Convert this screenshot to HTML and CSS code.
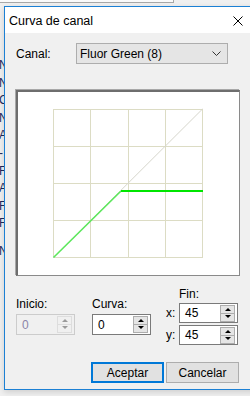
FILE: index.html
```html
<!DOCTYPE html>
<html lang="es">
<head>
    <meta charset="UTF-8">
    <title>Curva de canal</title>
    <link rel="stylesheet" href="styles.css">
</head>
<body>

<div class="desktop">
    <div class="back-top"></div>
    <ul class="back-list">
        <li>N</li>
        <li>N</li>
        <li>C</li>
        <li>N</li>
        <li>A</li>
        <li>-</li>
        <li>F</li>
        <li>A</li>
        <li>F</li>
        <li>F</li>
        <li class="gap">N</li>
    </ul>

    <div class="dialog">
        <div class="titlebar">
            <span class="title">Curva de canal</span>
            <svg class="close" width="10" height="10" viewBox="0 0 10 10">
                <path d="M0.5 0.5 L9.5 9.5 M9.5 0.5 L0.5 9.5" stroke="#000" stroke-width="1"/>
            </svg>
        </div>

        <div class="content">
            <div class="channel-row">
                <label class="channel-label">Canal:</label>
                <div class="select">
                    <span>Fluor Green (8)</span>
                    <svg width="9" height="5" viewBox="0 0 9 5">
                        <path d="M0.5 0.5 L4.5 4.5 L8.5 0.5" stroke="#333" fill="none"/>
                    </svg>
                </div>
            </div>

            <div class="curve-box">
                <svg width="221" height="183" viewBox="18 91 221 183">
                    <g stroke="#dcdcc4" stroke-width="1" fill="none">
                        <path d="M53.5 108 V257 M90.5 108 V257 M128.5 108 V257 M165.5 108 V257 M202.5 108 V257"/>
                        <path d="M53 108.5 H203 M53 145.5 H203 M53 182.5 H203 M53 219.5 H203 M53 256.5 H203"/>
                    </g>
                    <path d="M53 257 L202.5 108" stroke="#d6d6cc" stroke-width="1"/>
                    <path d="M53.5 256.5 L121 190" stroke="#5ce85c" stroke-width="1.6"/>
                    <path d="M121 190 H203" stroke="#00e600" stroke-width="2"/>
                </svg>
            </div>

            <div class="controls">
                <div class="field low">
                    <span class="field-label">Inicio:</span>
                    <div class="spin disabled">
                        <span class="value">0</span>
                        <div class="spin-buttons">
                            <span class="up"></span>
                            <span class="down"></span>
                        </div>
                    </div>
                </div>
                <div class="field low">
                    <span class="field-label">Curva:</span>
                    <div class="spin">
                        <span class="value">0</span>
                        <div class="spin-buttons">
                            <span class="up"></span>
                            <span class="down"></span>
                        </div>
                    </div>
                </div>
                <div class="field end">
                    <span class="field-label fin">Fin:</span>
                    <div class="xy-row">
                        <span class="axis">x:</span>
                        <div class="spin">
                            <span class="value">45</span>
                            <div class="spin-buttons">
                                <span class="up"></span>
                                <span class="down"></span>
                            </div>
                        </div>
                    </div>
                    <div class="xy-row">
                        <span class="axis">y:</span>
                        <div class="spin">
                            <span class="value">45</span>
                            <div class="spin-buttons">
                                <span class="up"></span>
                                <span class="down"></span>
                            </div>
                        </div>
                    </div>
                </div>
            </div>

            <div class="buttons">
                <button class="btn default">Aceptar</button>
                <button class="btn">Cancelar</button>
            </div>
        </div>
    </div>
</div>

</body>
</html>
```

FILE: styles.css
```css
body {
    margin: 0;
    padding: 0;
    font-family: "Liberation Sans", Arial, sans-serif;
    font-size: 12px;
    color: #000;
    background-color: #f0f0f0;
    overflow: hidden;
}
.desktop {
    position: relative;
    width: 250px;
    height: 396px;
    overflow: hidden;
    background-color: #f0f0f0;
}
.back-top {
    width: 173px;
    height: 2px;
    border-bottom: 1px solid #a8a8a8;
    border-right: 1px solid #a8a8a8;
    background-color: #fafafa;
}
.back-list {
    list-style: none;
    margin: 54px 0 0 0;
    padding: 0;
    color: #1e2a5a;
    line-height: 17.6px;
    font-size: 12px;
}
.back-list li {
    margin-left: -1px;
}
.back-list .gap {
    margin-top: 10px;
}
.dialog {
    position: absolute;
    left: 4px;
    top: 6px;
    width: 260px;
    height: 382px;
    border: 1px solid #1c80d4;
    background-color: #f0f0f0;
    box-shadow: 0 2px 6px rgba(0,0,0,0.15);
}
.titlebar {
    height: 25px;
    background-color: #fff;
    display: flex;
    align-items: center;
    padding-left: 4px;
    padding-top: 1px;
}
.title {
    flex: 1;
    font-size: 12.5px;
}
.close {
    margin-right: 22px;
}
.content {
    padding: 10px 0 0 11px;
    width: 223px;
}
.channel-row {
    display: flex;
    align-items: center;
    height: 21px;
}
.channel-label {
    width: 60px;
}
.select {
    height: 19px;
    border: 1px solid #adadad;
    background-color: #e5e5e5;
    display: flex;
    align-items: center;
    justify-content: space-between;
    padding: 0 6px 0 3px;
    box-sizing: content-box;
    width: 141px;
}
.curve-box {
    margin-top: 26px;
    width: 221px;
    height: 183px;
    border-top: 2px solid #6e6e6e;
    border-left: 2px solid #6e6e6e;
    border-right: 1px solid #8a8a8a;
    border-bottom: 1px solid #8a8a8a;
    background-color: #fff;
    box-shadow: -1px -1px 0 #a8a8a8;
}
.curve-box svg {
    display: block;
}
.controls {
    display: flex;
    align-items: flex-start;
    margin-top: 11px;
}
.field {
    display: flex;
    flex-direction: column;
}
.field.low {
    padding-top: 10px;
    margin-right: 17px;
}
.field.low + .field.low {
    margin-right: 15px;
}
.field-label {
    line-height: 15px;
    margin-bottom: 2px;
}
.field-label.fin {
    margin-left: 13px;
    margin-bottom: 1px;
}
.xy-row {
    display: flex;
    align-items: center;
    margin-bottom: 2px;
}
.axis {
    width: 13px;
}
.spin {
    border: 1px solid #7a7a7a;
    background-color: #fff;
    display: flex;
    align-items: center;
    justify-content: space-between;
    padding-left: 5px;
    box-sizing: border-box;
    width: 59px;
    height: 21px;
}
.xy-row .spin {
    height: 20px;
}
.spin.disabled {
    border-color: #cccccc;
    background-color: #f0f0f0;
    color: #8a84a8;
}
.spin-buttons {
    display: flex;
    flex-direction: column;
    margin-right: 2px;
}
.spin-buttons span {
    width: 13px;
    height: 7px;
    border: 1px solid #adadad;
    background-color: #e5e5e5;
    position: relative;
}
.spin-buttons .down {
    border-top: none;
    height: 7px;
}
.spin-buttons span::after {
    content: "";
    position: absolute;
    left: 4px;
    top: 2px;
    border-left: 3px solid transparent;
    border-right: 3px solid transparent;
}
.spin-buttons .up::after {
    border-bottom: 3px solid #000;
}
.spin-buttons .down::after {
    top: 1px;
    border-top: 3px solid #000;
}
.spin.disabled .spin-buttons span {
    border-color: #dddddd;
    background-color: #f0f0f0;
}
.spin.disabled .spin-buttons .up::after {
    border-bottom-color: #9a9a9a;
}
.spin.disabled .spin-buttons .down::after {
    border-top-color: #9a9a9a;
}
.buttons {
    display: flex;
    justify-content: flex-end;
    gap: 2px;
    margin-top: 15px;
}
.btn {
    width: 73px;
    height: 21px;
    padding: 0;
    border: 1px solid #adadad;
    background-color: #e1e1e1;
    font-family: "Liberation Sans", Arial, sans-serif;
    font-size: 12px;
    color: #000;
}
.btn.default {
    border: 2px solid #0078d7;
}
```
